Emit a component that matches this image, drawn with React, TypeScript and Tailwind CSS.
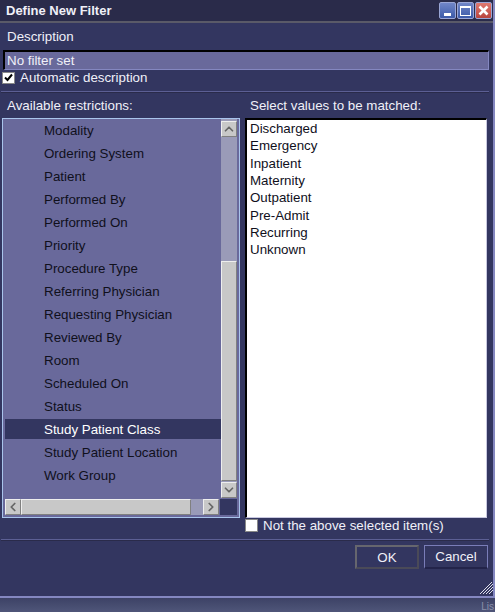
import { ChevronDown, ChevronLeft, ChevronRight, ChevronUp } from 'lucide-react'

const restrictions = [
  'Modality',
  'Ordering System',
  'Patient',
  'Performed By',
  'Performed On',
  'Priority',
  'Procedure Type',
  'Referring Physician',
  'Requesting Physician',
  'Reviewed By',
  'Room',
  'Scheduled On',
  'Status',
  'Study Patient Class',
  'Study Patient Location',
  'Work Group',
]

const values = ['Discharged', 'Emergency', 'Inpatient', 'Maternity', 'Outpatient', 'Pre-Admit', 'Recurring', 'Unknown']

const raised = 'bg-[#c8c8c8] border border-t-[#eeeeee] border-l-[#eeeeee] border-b-[#808080] border-r-[#808080]'

function ScrollButton({ children }: { children: React.ReactNode }) {
  return <div className={`${raised} w-[16px] h-[16px] shrink-0 flex items-center justify-center text-[#666666]`}>{children}</div>
}

function WinButton({ color, children }: { color: string; children: React.ReactNode }) {
  return <div className={`w-[17px] h-[17px] rounded-[2px] border border-[#9aa6d6] flex items-center justify-center bg-gradient-to-b ${color}`}>{children}</div>
}

function Separator() {
  return <div className="ml-px mr-[4px] h-[2px] shrink-0 border-t border-t-[#5c5f94] border-b border-b-[#2a2b4a]" />
}

export default function App() {
  return (
    <div className="w-[495px] h-[612px] flex flex-col bg-[#333660] text-[13.33px] leading-[17px] text-[#f0f0f8] overflow-hidden" style={{ fontFamily: '"Liberation Sans", Arial, sans-serif' }}>
      <div className="h-[596px] shrink-0 flex flex-col border-r-2 border-r-[#8487c0]">
        {/* title bar */}
        <div className="h-[21px] shrink-0 bg-[#2a2b4a] flex items-center justify-between pl-[6px] pr-[1px] font-bold text-[13px]">
          <span>Define New Filter</span>
          <div className="flex gap-px">
            <WinButton color="from-[#7186c8] to-[#3c5aa8]"><div className="w-[7px] h-[3px] bg-white mt-[7px]" /></WinButton>
            <WinButton color="from-[#7186c8] to-[#3c5aa8]"><div className="w-[11px] h-[10px] border border-t-2 border-white" /></WinButton>
            <WinButton color="from-[#e07a72] to-[#b8443e]">
              <svg width="11" height="11" viewBox="0 0 11 11"><path d="M1.5 1.5 9.5 9.5M9.5 1.5 1.5 9.5" stroke="white" strokeWidth="2.6" /></svg>
            </WinButton>
          </div>
        </div>
        <div className="h-[2px] shrink-0 bg-[#5a5a68]" />

        <div className="pl-[7px] mt-[5px] mb-px h-[17px] shrink-0">Description</div>
        <div className="ml-[3px] mr-[4px] mt-[4px] h-[20px] shrink-0 bg-[#69699b] border-t-2 border-l-2 border-t-black border-l-black border-r border-b border-r-[#8487c0] border-b-[#8487c0] pl-[2px] flex items-center">No filter set</div>
        <div className="flex items-center gap-[5px] pl-[2px] h-[15px] shrink-0">
          <div className="w-[13px] h-[12px] bg-white border border-[#888888] flex items-center justify-center">
            <svg width="9" height="9" viewBox="0 0 9 9"><path d="M1 4.5 3.5 7 8 1.5" fill="none" stroke="black" strokeWidth="2" /></svg>
          </div>
          <span>Automatic description</span>
        </div>
        <div className="mt-[6px]"><Separator /></div>

        <div className="flex gap-[5px] ml-[2px] mr-[5px] mt-[4px] shrink-0">
          {/* left column */}
          <div className="w-[238px] shrink-0 flex flex-col">
            <div className="pl-[5px] h-[17px] mb-[4px]">Available restrictions:</div>
            <div className="h-[400px] border border-[#a9c4ec] bg-[#69699b] flex flex-col pr-[2px] pb-[2px]">
              <div className="flex flex-1 min-h-0">
                <div className="flex-1 pl-[2px]">
                  {restrictions.map((r) =>
                    r === 'Study Patient Class' ? (
                      <div key={r} className="h-[23px] pt-px pb-[2px] text-white">
                        <div className="h-full pl-[39px] flex items-center bg-[#333660]">{r}</div>
                      </div>
                    ) : (
                      <div key={r} className="h-[23px] pl-[39px] flex items-center text-[#10101c]">{r}</div>
                    ),
                  )}
                </div>
                <div className="w-[16px] shrink-0 flex flex-col bg-[#9a9bb8]">
                  <div className="mt-[2px]"><ScrollButton><ChevronUp size={14} strokeWidth={3} /></ScrollButton></div>
                  <div className="flex-1 pt-[124px]">
                    <div className={`${raised} h-[220px]`} />
                  </div>
                  <ScrollButton><ChevronDown size={14} strokeWidth={3} /></ScrollButton>
                </div>
              </div>
              <div className="flex h-[16px] shrink-0 mt-px">
                <div className="flex flex-1 bg-[#9a9bb8] ml-[2px]">
                  <ScrollButton><ChevronLeft size={14} strokeWidth={3} /></ScrollButton>
                  <div className={`${raised} w-[170px]`} />
                  <div className="flex-1" />
                  <ScrollButton><ChevronRight size={14} strokeWidth={3} /></ScrollButton>
                </div>
                <div className="w-[17px] bg-[#333660] ml-px" />
              </div>
            </div>
          </div>

          {/* right column */}
          <div className="flex-1 flex flex-col min-w-0">
            <div className="pl-[5px] h-[17px] mb-[4px]">Select values to be matched:</div>
            <div className="h-[400px] mr-px bg-white border-t-2 border-l-2 border-t-black border-l-black border-r border-b border-r-[#c8c8e0] border-b-[#c8c8e0] pl-[3px] text-[#10101c]">
              {values.map((v) => (
                <div key={v} className="h-[17.3px] flex items-center">{v}</div>
              ))}
            </div>
            <div className="flex items-center gap-[5px] mt-px h-[13px]">
              <div className="w-[13px] h-[13px] bg-white border border-[#888888]" />
              <span>Not the above selected item(s)</span>
            </div>
          </div>
        </div>

        <div className="mt-[7px]"><Separator /></div>

        <div className="flex justify-end gap-[5px] mt-[4px] pr-[5px] shrink-0">
          <div className="w-[64px] h-[24px] border-2 border-t-[#66666e] border-l-[#66666e] border-r-[#4a4a58] border-b-[#4a4a58] bg-[#333660] flex items-center justify-center">OK</div>
          <div className="w-[64px] h-[24px] border border-b-2 border-t-[#7a7db8] border-l-[#7a7db8] border-r-[#7a7db8] border-b-[#23244a] bg-[#333660] flex items-center justify-center">Cancel</div>
        </div>

        <div className="flex justify-end mt-[13px] shrink-0">
          <svg width="13" height="12" viewBox="0 0 13 12">
            <path d="M0 12 12 0M3 12 13 2M6 12 13 5M9 12 13 8" stroke="#e0e0ea" strokeWidth="1" />
          </svg>
        </div>
      </div>

      <div className="h-[2px] shrink-0 bg-[#8487c0]" />
      <div className="flex-1 bg-gradient-to-b from-[#3d4266] to-[#4f5679] flex justify-end items-end pr-[1px] text-[10px] leading-[10px] text-[#8a90aa]">
        <span>Lis</span>
      </div>
    </div>
  )
}
